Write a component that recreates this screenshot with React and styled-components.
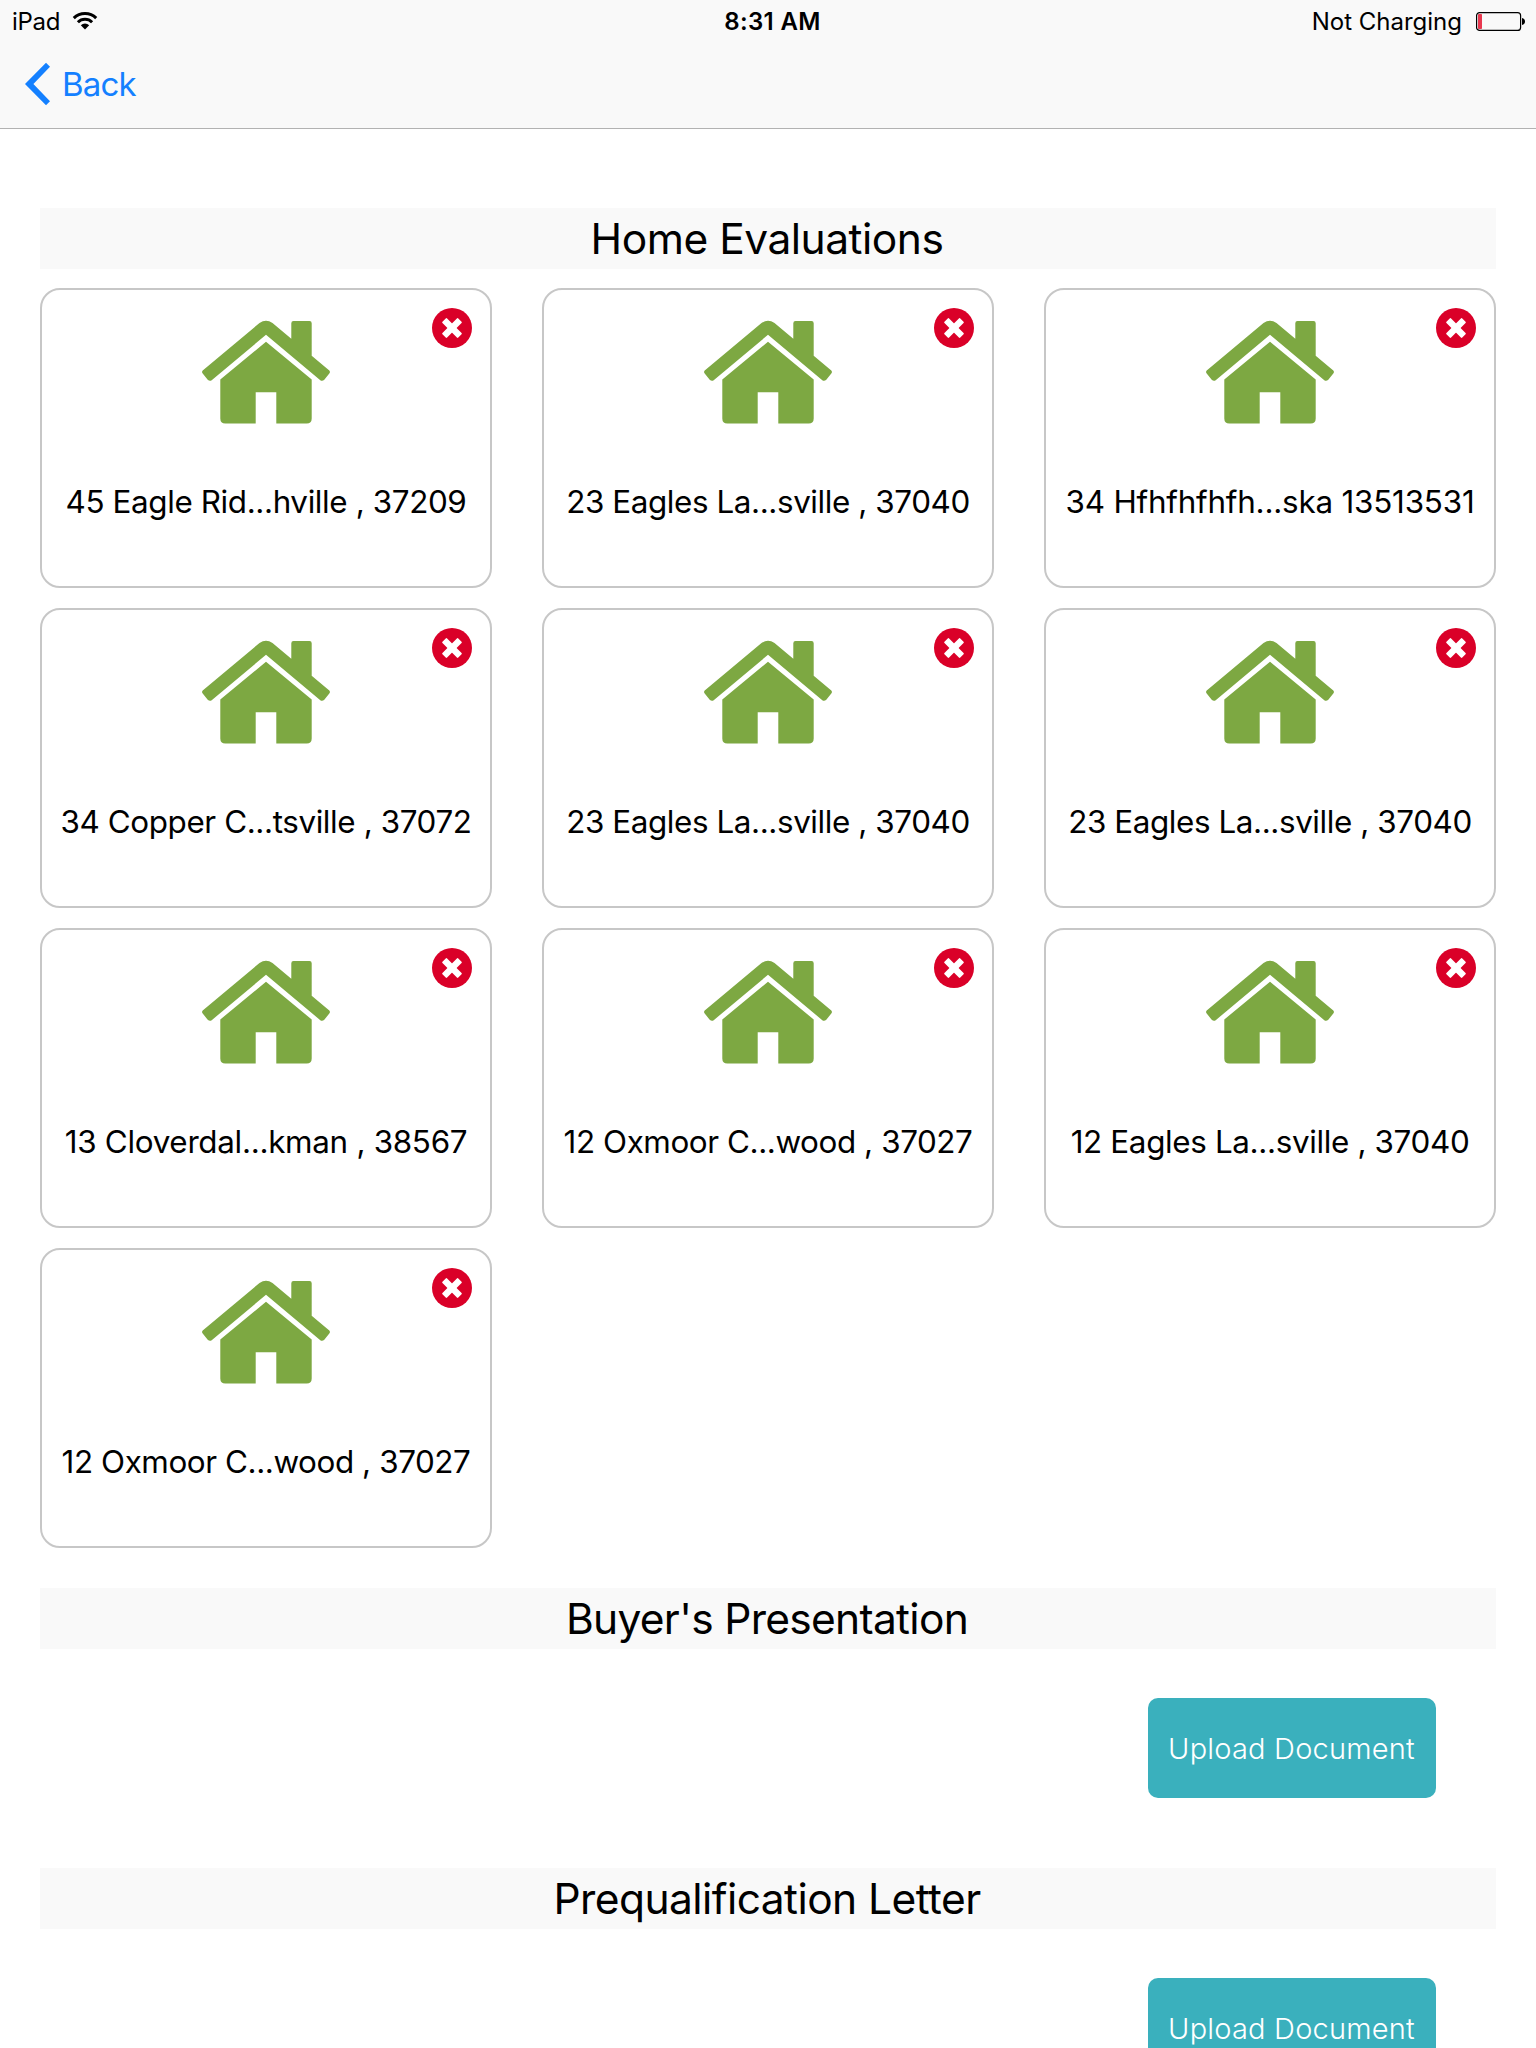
import React from 'react';
import styled, { createGlobalStyle } from 'styled-components';

const GlobalStyle = createGlobalStyle`
  *, *::before, *::after { box-sizing: border-box; }
  html, body { margin: 0; padding: 0; background: #fff; }
  body { overflow: hidden; }
`;

const Screen = styled.div`
  width: 1536px;
  height: 2048px;
  overflow: hidden;
  background: #fff;
  color: #000;
  font-family: Inter, 'Liberation Sans', sans-serif;
`;

const TopChrome = styled.header`
  height: 129px;
  background: #f9f9f9;
  border-bottom: 1px solid #b2b2b2;
`;

const StatusBar = styled.div`
  display: grid;
  grid-template-columns: 1fr auto 1fr;
  align-items: center;
  height: 40px;
  padding: 0 11px 0 12px;
  font-size: 24px;
  line-height: 40px;
`;

const StatusGroup = styled.div`
  display: flex;
  align-items: center;
  justify-content: ${(p) => (p.$end ? 'flex-end' : 'flex-start')};
  gap: ${(p) => p.$gap}px;
`;

const StatusText = styled.span`
  padding-top: 2px;
  letter-spacing: ${(p) => p.$tracking || 0}px;
`;

const Clock = styled.time`
  padding: 2px 0 0 8px;
  font-weight: 600;
  letter-spacing: 0.34px;
`;

const NavBar = styled.nav`
  display: flex;
  align-items: center;
  height: 88px;
`;

const BackButton = styled.button`
  display: flex;
  align-items: center;
  gap: 11px;
  margin: 0;
  padding: 0 0 0 25px;
  border: 0;
  background: none;
  color: #1480ff;
  font: 400 33px/44px Inter, 'Liberation Sans', sans-serif;
  letter-spacing: -0.8px;
`;

const Content = styled.main`
  padding: 79px 40px 0;
`;

const SectionTitle = styled.h2`
  height: 61px;
  margin: 0;
  padding-right: 2px;
  background: #f9f9f9;
  font-size: 42.5px;
  font-weight: 400;
  line-height: 61px;
  text-align: center;
  letter-spacing: ${(p) => p.$tracking}px;
`;

const CardGrid = styled.div`
  display: grid;
  grid-template-columns: repeat(3, 452px);
  grid-auto-rows: 300px;
  gap: 20px 50px;
  padding: 19px 0 40px;
`;

const Card = styled.article`
  position: relative;
  display: flex;
  flex-direction: column;
  align-items: center;
  padding-top: 30px;
  border: 2px solid #c7c7c7;
  border-radius: 20px;
`;

const Address = styled.p`
  margin: 58px 0 0;
  font-size: 31.4px;
  line-height: 40px;
  white-space: nowrap;
  letter-spacing: ${(p) => p.$tracking}px;
`;

const RemoveButton = styled.button`
  position: absolute;
  top: 18px;
  right: 18px;
  width: 40px;
  height: 40px;
  padding: 0;
  border: 0;
  background: none;
`;

const Icon = styled.svg`
  display: block;
  flex: none;
`;

const UploadRow = styled.div`
  display: flex;
  justify-content: flex-end;
  padding: 49px 60px 70px 0;
`;

const UploadButton = styled.button`
  width: 288px;
  height: 100px;
  padding: 1px 1px 0 0;
  border: 0;
  border-radius: 10px;
  background: #3ab0bd;
  color: #fff;
  font: 300 29px/100px Inter, 'Liberation Sans', sans-serif;
  letter-spacing: 0.2px;
  white-space: nowrap;
`;

const WifiIcon = () => (
  <Icon width="26" height="20" viewBox="0 0 26 20">
    <g fill="none" stroke="#000" strokeWidth="3">
      <path d="M1.8 7.1a16 16 0 0 1 22.4 0" />
      <path d="M5.9 11.2a10.1 10.1 0 0 1 14.2 0" />
    </g>
    <path d="M8.8 14.2a6 6 0 0 1 8.4 0L13 18.4z" fill="#000" />
  </Icon>
);

const BatteryIcon = () => (
  <Icon width="49" height="19" viewBox="0 0 49 19">
    <rect x="0.6" y="0.6" width="44" height="17.8" rx="3" fill="none" stroke="#000" strokeWidth="1.2" />
    <rect x="2" y="2" width="4" height="15" rx="0.8" fill="#e8384f" />
    <path d="M46 6c2 .3 3 1.700 3 3.500s-1 3.200-3 3.500z" fill="#000" />
  </Icon>
);

const ChevronIcon = () => (
  <Icon width="26" height="44" viewBox="0 0 26 44" fill="currentColor">
    <path d="M21 .8 25 4.800 8.400 22 25 39.200 21 43.200 0 22z" />
  </Icon>
);

const HouseIcon = () => (
  <Icon width="128" height="104" viewBox="0 0 128 104" fill="#7da842">
    <path d="M.7 50.500 57.500 3Q64-1.600 70.500 3L89.300 18.700V3.200Q89.300 1 91.500 1H107.500Q109.700 1 109.700 3.200V35.800L127.300 50.500Q128.600 52 127.300 53.600L122.300 59.700Q120.300 61.700 118.300 60.200L64 14.800 9.700 60.200Q7.700 61.700 5.700 59.700L.7 53.600Q-.6 52 .7 50.500Z" />
    <path d="M64 21.700 109.700 59.500V98.500Q109.700 103.500 104.700 103.500H74.300V72.300H53.700V103.500H23.300Q18.300 103.500 18.300 98.500V59.500Z" />
  </Icon>
);

const RemoveIcon = () => (
  <Icon width="40" height="40" viewBox="0 0 40 40">
    <circle cx="20" cy="20" r="20" fill="#da0028" />
    <g fill="#fff" transform="rotate(45 20 20)">
      <rect x="8.800" y="16.700" width="22.400" height="6.600" rx="1" />
      <rect x="16.700" y="8.800" width="6.600" height="22.400" rx="1" />
    </g>
  </Icon>
);

const EVALUATIONS = [
  { address: '45 Eagle Rid...hville , 37209', tracking: -0.38 },
  { address: '23 Eagles La...sville , 37040', tracking: -0.41 },
  { address: '34 Hfhfhfhfh...ska 13513531', tracking: -0.21 },
  { address: '34 Copper C...tsville , 37072', tracking: -0.39 },
  { address: '23 Eagles La...sville , 37040', tracking: -0.41 },
  { address: '23 Eagles La...sville , 37040', tracking: -0.41 },
  { address: '13 Cloverdal...kman , 38567', tracking: -0.3 },
  { address: '12 Oxmoor C...wood , 37027', tracking: -0.42 },
  { address: '12 Eagles La...sville , 37040', tracking: -0.35 },
  { address: '12 Oxmoor C...wood , 37027', tracking: -0.42 },
];

const DOCUMENTS = [
  { title: "Buyer's Presentation", tracking: -0.7 },
  { title: 'Prequalification Letter', tracking: -0.56 },
];

export default function App() {
  return (
    <Screen>
      <GlobalStyle />
      <TopChrome>
        <StatusBar>
          <StatusGroup $gap={12}>
            <StatusText $tracking={-0.3}>iPad</StatusText>
            <WifiIcon />
          </StatusGroup>
          <Clock>8:31 AM</Clock>
          <StatusGroup $end $gap={14}>
            <StatusText>Not Charging</StatusText>
            <BatteryIcon />
          </StatusGroup>
        </StatusBar>
        <NavBar>
          <BackButton>
            <ChevronIcon />
            Back
          </BackButton>
        </NavBar>
      </TopChrome>
      <Content>
        <SectionTitle $tracking={-0.49}>Home Evaluations</SectionTitle>
        <CardGrid>
          {EVALUATIONS.map((item, i) => (
            <Card key={i}>
              <HouseIcon />
              <Address $tracking={item.tracking}>{item.address}</Address>
              <RemoveButton aria-label="Remove">
                <RemoveIcon />
              </RemoveButton>
            </Card>
          ))}
        </CardGrid>
        {DOCUMENTS.map((doc) => (
          <section key={doc.title}>
            <SectionTitle $tracking={doc.tracking}>{doc.title}</SectionTitle>
            <UploadRow>
              <UploadButton>Upload Document</UploadButton>
            </UploadRow>
          </section>
        ))}
      </Content>
    </Screen>
  );
}
